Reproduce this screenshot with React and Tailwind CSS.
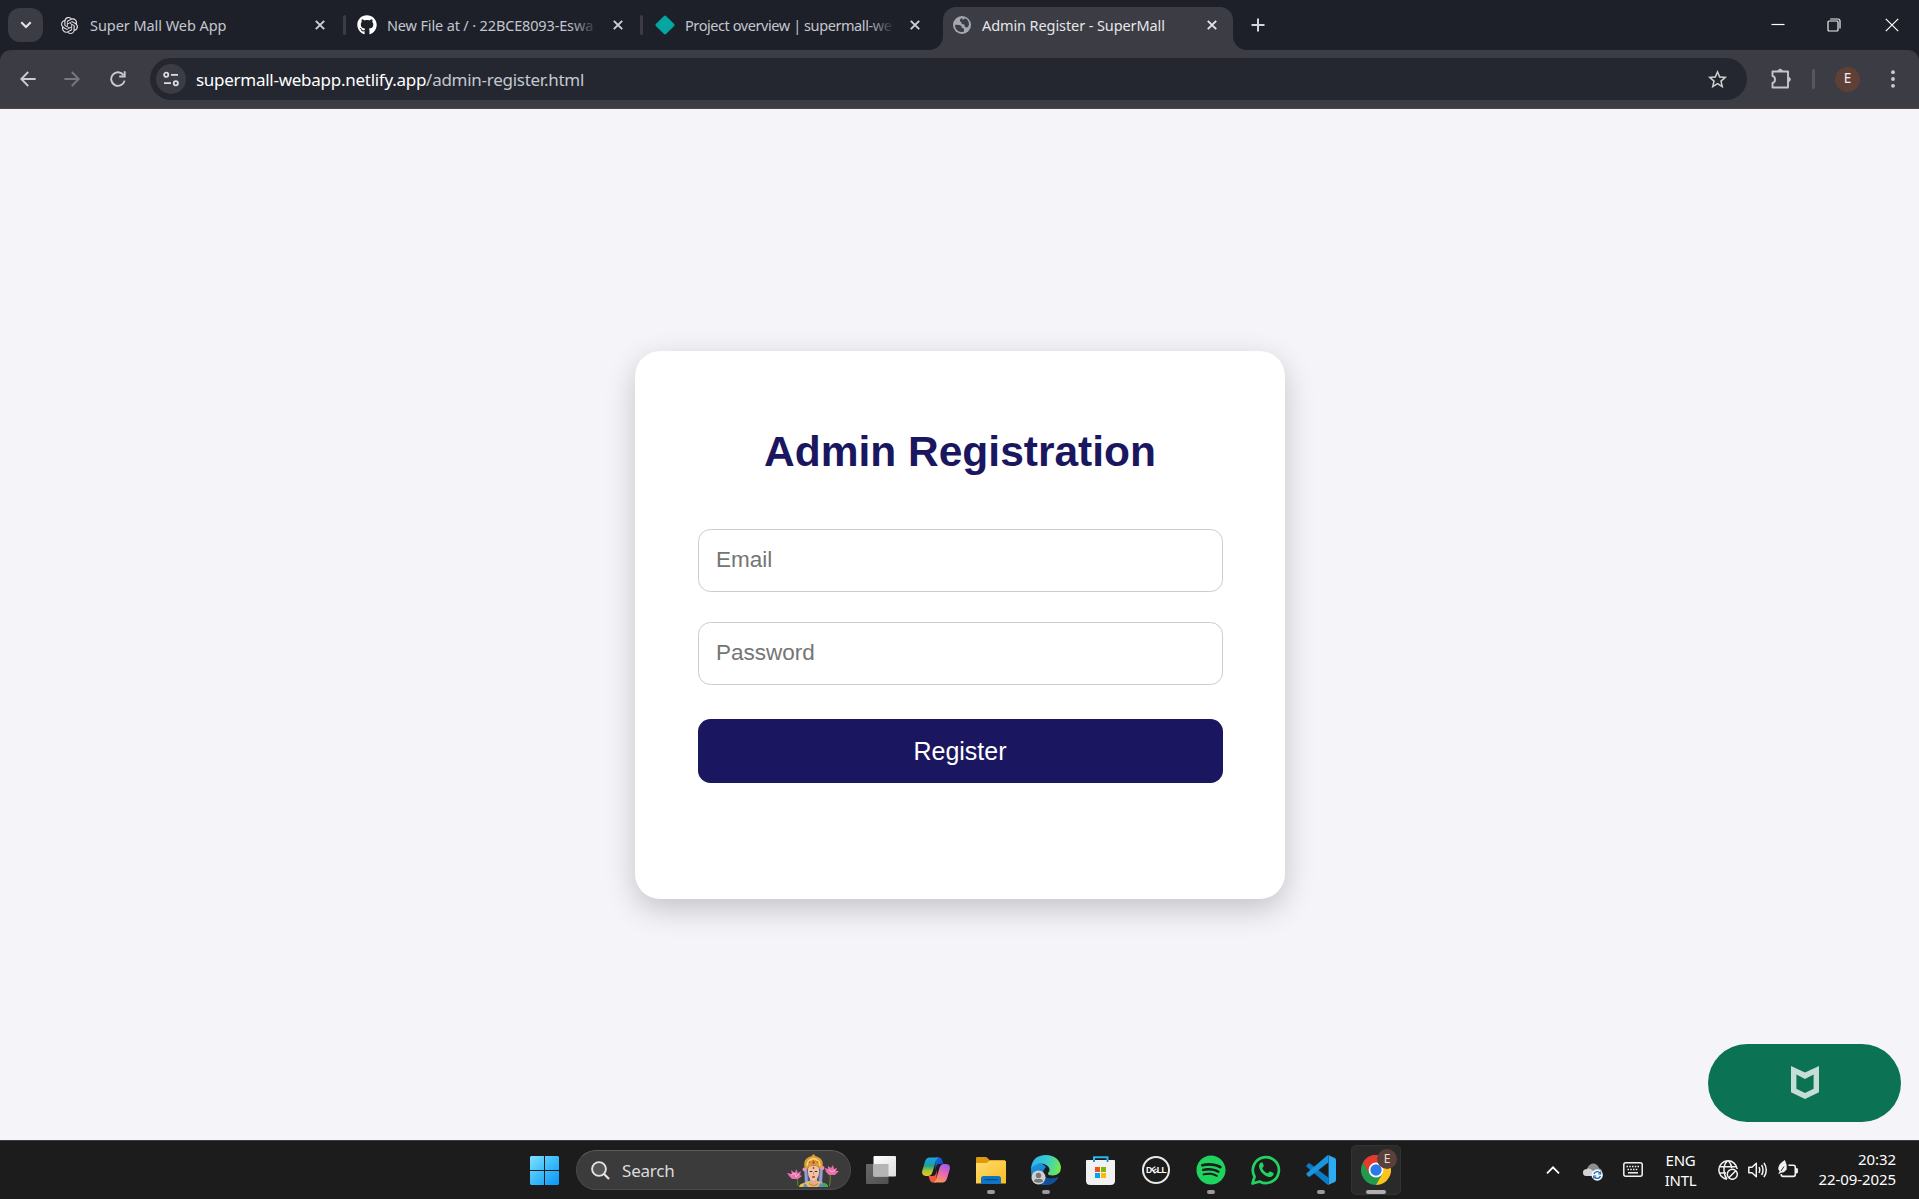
import React from "react";
import { SiOpenai } from "react-icons/si";
import { FaGithub, FaSpotify } from "react-icons/fa";
import { MdStarBorder } from "react-icons/md";

function CloseGlyph({ className }) {
  return (
    <svg viewBox="0 0 10 10" className={className} fill="none" stroke="currentColor" strokeWidth="1.9">
      <path d="M0.8 0.8 9.2 9.2M9.2 0.8 0.8 9.2" />
    </svg>
  );
}

function GlobeIcon() {
  return (
    <svg viewBox="0 0 18 18" className="size-[18px]">
      <circle cx="9" cy="9" r="9" fill="#a2a7b1" />
      <path d="M9.200 2.100Q6.500 3 7 5Q7.300 6 8.500 6.200Q8 8 10 8.300Q12.500 8.500 11.500 10.500L13.200 11.500Q15.800 11 16 8.500Q16 3.500 11.500 2.300L10.500 3.800Q9 4 9.200 2.100Z" fill="#3b3c44" />
      <path d="M2.100 8.700 6.500 9Q9 9.500 8.800 11.500Q9 12.500 10.500 12.300Q11.500 13 10.800 15.700Q5 16.800 2.500 12Q2 10.500 2.100 8.700Z" fill="#3b3c44" />
    </svg>
  );
}

function Tab({ icon, title, width, iconWidth, tracking, fade }) {
  return (
    <div className={`flex h-[50px] shrink-0 items-center ${width}`}>
      <div className={`flex shrink-0 items-center ${iconWidth}`}>{icon}</div>
      <div className="relative h-[22px] min-w-0 flex-1 overflow-hidden whitespace-nowrap">
        <span className={`block text-[14.5px] leading-[22px] text-[#c3c6cf] ${tracking}`}>{title}</span>
        {fade && <div className="absolute inset-y-0 right-0 w-7 bg-linear-to-r from-transparent to-[#1d2028]" />}
      </div>
      <div className="flex w-[39px] shrink-0 justify-center">
        <CloseGlyph className="size-[10px] text-[#cfd1d8]" />
      </div>
    </div>
  );
}

function Separator({ className }) {
  return <div className={`h-5 w-[3px] shrink-0 rounded-full bg-[#3b3c44] ${className}`} />;
}

function TabStrip() {
  return (
    <div className="flex h-[50px] w-full items-center bg-[#1d2028]">
      <div className="ml-2 flex h-[34px] w-[35px] shrink-0 items-center justify-center rounded-[12px] bg-[#3b3c44]">
        <svg viewBox="0 0 12 8" className="h-2 w-3" fill="none" stroke="#e3e3e8" strokeWidth="2.2">
          <path d="M1.3 1.3 6 6 10.7 1.3" />
        </svg>
      </div>
      <Tab
        width="ml-[18px] w-[278px]"
        iconWidth="w-[29px]"
        tracking="tracking-[-0.06px]"
        icon={<SiOpenai className="size-[17px] text-[#e6e6ea]" />}
        title="Super Mall Web App"
      />
      <Separator className="ml-[4px]" />
      <Tab
        width="ml-[11px] w-[280px]"
        iconWidth="w-[30px]"
        tracking="tracking-[-0.15px]"
        icon={<FaGithub className="size-5 text-white" />}
        title="New File at / · 22BCE8093-Eswa"
        fade
      />
      <Separator className="ml-[3px]" />
      <Tab
        width="ml-[12px] w-[279px]"
        iconWidth="w-[30px]"
        tracking="tracking-[-0.42px]"
        icon={
          <svg viewBox="0 0 20 20" className="size-5">
            <path d="M9 .9Q10 0 11 .9L19.2 9Q20 10 19.2 11L11 19.1Q10 20 9 19.1L.8 11Q0 10 .8 9Z" fill="#05a5a0" />
          </svg>
        }
        title="Project overview | supermall-we"
        fade
      />
      <div className="ml-[-5px] flex h-[50px] items-end">
        <svg viewBox="0 0 14 14" className="size-[14px]"><path d="M14 0A14 14 0 0 1 0 14H14Z" fill="#3b3c44" /></svg>
        <div className="mt-2 flex h-[43px] w-[290px] items-center rounded-t-[13px] bg-[#3b3c44] pb-[7px] pl-[10px]">
          <GlobeIcon />
          <span className="ml-[11px] flex-1 whitespace-nowrap text-[14.5px] leading-[22px] tracking-[-0.1px] text-[#e6e6ea]">
            Admin Register - SuperMall
          </span>
          <CloseGlyph className="mr-[16px] size-[10px] text-[#e6e6ea]" />
        </div>
        <svg viewBox="0 0 14 14" className="size-[14px]"><path d="M0 0A14 14 0 0 0 14 14H0Z" fill="#3b3c44" /></svg>
      </div>
      <svg viewBox="0 0 14 14" className="ml-[4px] size-[14px]" stroke="#d4d5dc" strokeWidth="2">
        <path d="M7 .5V13.5M.5 7H13.5" />
      </svg>
      <div className="flex-1" />
      <svg viewBox="0 0 14 14" className="mr-[42px] size-[14px]" stroke="#fff" strokeWidth="1.2">
        <path d="M.5 6.500H13.5" />
      </svg>
      <svg viewBox="0 0 14 14" className="mr-[44px] size-[14px]" fill="none" stroke="#f2f2f2" strokeWidth="1.2">
        <rect x="1" y="3" width="10" height="10" rx="1" />
        <path d="M3.2 1H11Q13 1 13 3V10.5" />
      </svg>
      <svg viewBox="0 0 14 14" className="mr-[20.5px] size-[14px]" stroke="#fff" strokeWidth="1.2">
        <path d="M.8.8 13.2 13.2M13.2.8.8 13.2" />
      </svg>
    </div>
  );
}

function Toolbar() {
  return (
    <div className="bg-[#1d2028]">
      <div className="flex h-[59px] items-center rounded-t-[11px] border-b border-[#504648] bg-[#3b3c44]">
        <svg viewBox="0 0 16 16" className="ml-5 size-4" fill="none" stroke="#c9cbd3" strokeWidth="1.9">
          <path d="M15.7 8H1.6M8.2 1 1.3 8 8.2 15" />
        </svg>
        <svg viewBox="0 0 16 16" className="ml-[28px] size-4" fill="none" stroke="#777980" strokeWidth="1.9">
          <path d="M.3 8H14.4M7.8 1 14.7 8 7.8 15" />
        </svg>
        <svg viewBox="0 0 16 16" className="ml-[29.5px] size-4" fill="none" stroke="#c9cbd3" strokeWidth="1.9">
          <path d="M13.6 4.200A6.800 6.800 0 1 0 14.6 9.600" />
          <path d="M14.7.3V5.500H9.2" />
        </svg>
        <div className="ml-[24.5px] flex h-[42px] w-[1597px] items-center rounded-full bg-[#24272f]">
          <div className="ml-[6px] flex size-[30px] items-center justify-center rounded-full bg-[#3b3c44]">
            <svg viewBox="0 0 16 16" className="size-4" fill="none" stroke="#dcdde2" strokeWidth="1.8">
              <circle cx="3.2" cy="3.8" r="2.1" />
              <path d="M8 3.8H15M1 12.2H8" />
              <circle cx="12.8" cy="12.2" r="2.1" />
            </svg>
          </div>
          <div className="ml-[10px] flex-1 pt-px whitespace-nowrap text-[17px] leading-6 tracking-[-0.27px] text-white">
            supermall-webapp.netlify.app<span className="text-[#c4c7d0]">/admin-register.html</span>
          </div>
          <MdStarBorder className="mr-[18px] size-[23px] text-[#cfcfd2]" />
        </div>
        <svg viewBox="0 0 22 22" className="ml-[23px] size-[22px]" fill="none" stroke="#c3c6d0" strokeWidth="1.9" strokeLinejoin="round">
          <path d="M2.5 3.5H18V19.500H2.5V15Q5 14.500 5 11.500T2.500 8Z" />
          <path d="M8 2.800A2.300 2.300 0 0 1 12.400 2.800ZM18.700 9.200A2.300 2.300 0 0 1 18.700 13.600Z" fill="#c3c6d0" strokeWidth="1" />
        </svg>
        <div className="ml-[20px] h-5 w-[3px] rounded-full bg-[#56585f]" />
        <div className="ml-[20px] flex size-[25px] items-center justify-center rounded-full bg-[#5f4037] text-[13.500px] leading-none text-[#f0eeee]">
          E
        </div>
        <svg viewBox="0 0 4 18" className="ml-[30.5px] h-[18px] w-1" fill="#c9cbd3">
          <circle cx="2" cy="2.2" r="1.9" />
          <circle cx="2" cy="9" r="1.9" />
          <circle cx="2" cy="15.8" r="1.9" />
        </svg>
      </div>
    </div>
  );
}

function RegisterPage() {
  return (
    <div className="relative flex h-[1031px] flex-col items-center bg-[#f4f4f9] pt-[242px] pl-px font-['Liberation_Sans',Arial,sans-serif]">
      <form className="flex h-[548px] w-[650px] flex-col rounded-[25px] bg-white pr-[62px] pl-[63px] pt-[76px] shadow-[0_10px_31px_rgba(0,0,0,0.2)]">
        <h1 className="pr-px text-center text-[42.5px] leading-[50px] font-bold text-[#1a1660]">Admin Registration</h1>
        <input
          type="email"
          placeholder="Email"
          className="mt-[52px] h-[63px] rounded-[12.5px] border border-[#ccc] px-[17px] pb-px text-[22.5px] placeholder:text-[#757575]"
        />
        <input
          type="password"
          placeholder="Password"
          className="mt-[30px] h-[63px] rounded-[12.5px] border border-[#ccc] px-[17px] pb-px text-[22.5px] placeholder:text-[#757575]"
        />
        <button type="button" className="mt-[34px] h-[64px] rounded-[12.5px] bg-[#1a1660] pt-0.5 pr-px text-[25px] text-white">
          Register
        </button>
      </form>
      <div className="absolute right-[18px] bottom-[18px] flex h-[78px] w-[193px] items-center justify-center rounded-full bg-[#0b7353]">
        <svg viewBox="0 0 28 33" className="mb-px ml-px h-[33px] w-7">
          <path
            fillRule="evenodd"
            fill="#c5ded5"
            d="M0 0 14 6.6 28 0V26.2L14 33 0 26.2ZM5.4 8.6V22.8L14 27 22.6 22.8V8.6L14 13Z"
          />
        </svg>
      </div>
    </div>
  );
}

function GoddessArt() {
  return (
    <svg viewBox="0 0 52 33" className="h-[33px] w-[52px]">
      <path d="M9 21Q11 27 11 32M43 17Q44 25 42.500 32" stroke="#5d7f1c" strokeWidth="1.200" fill="none" />
      <g fill="#e870ad">
        <path d="M0 19 5 20 4 16 8 19 9 15 11 19 14 17 13 21 15 22 11 25H5L2 22Z" />
        <path d="M38 14 41 15 41 12 44 14 46 11 47 15 50 14 49 17 52 17 48 21H42L39 18Z" />
      </g>
      <path d="M4 21 8 19 9 23 12 20M42 16 45 18 48 16" stroke="#fbb9da" strokeWidth="1" fill="none" />
      <path d="M19 12Q17 20 18 27L15 31H38L35 27Q36 20 34 12Z" fill="#4b579f" />
      <path d="M12 33Q12.500 29.500 17 29L22 27H31L36 29Q40.500 29.500 41 33Z" fill="#e9c04a" />
      <path d="M34 28.500Q40.500 29 41 33H35Z" fill="#46a566" />
      <path d="M18 29 21 33H16ZM34 28 31 33H36Z" fill="#5a8ed2" />
      <path d="M17 14H20L21 28 18 30ZM33 14H36L35 30 32 28Z" fill="#c9cfe6" opacity=".6" />
      <path d="M23 23H30V28L32 31 27 33 21 31 23 28Z" fill="#e3ab88" />
      <path d="M21 15Q21 12 26.500 11.500 32 12 32 15V19Q31.500 25 26.500 27 21.500 25 21 19Z" fill="#efc3a2" />
      <path d="M17.500 14Q16 5 22 3Q25 2.500 26.500 0Q28 2.500 31 3Q37 5 35.500 14L32.500 15Q31 11.500 26.500 11.500T20.500 15Z" fill="#d99d33" />
      <path d="M20 12Q20 6 26.500 4.500Q33 6 33 12" fill="none" stroke="#f7d673" strokeWidth="1.400" />
      <path d="M26.500 6 28 8.500 26.500 10.500 25 8.500Z" fill="#cf3f4c" />
      <circle cx="22.500" cy="8" r=".8" fill="#cf3f4c" />
      <circle cx="30.500" cy="8" r=".8" fill="#cf3f4c" />
      <circle cx="26.500" cy="14" r=".9" fill="#c8223a" />
      <path d="M22.800 17.500H25.200M27.800 17.500H30.200" stroke="#46251b" strokeWidth="1.100" />
      <path d="M26.500 18V20.800" stroke="#c98664" strokeWidth=".9" />
      <path d="M25.200 23H27.900" stroke="#c2262e" strokeWidth="1.500" />
      <circle cx="17.500" cy="15.500" r="2" fill="#ee8fb9" />
      <circle cx="35.500" cy="14" r="2" fill="#ee8fb9" />
      <path d="M22 29.500Q26.500 33.500 31 29.500" stroke="#c8862a" strokeWidth="1" fill="none" />
    </svg>
  );
}

function TaskButton({ children, indicator, active }) {
  return (
    <div
      className={`relative flex h-[50px] w-[50px] shrink-0 items-center justify-center rounded-[5px] ${
        active ? "border border-[#333] bg-[#2a2a2a]" : ""
      }`}
    >
      {children}
      {indicator && (
        <div
          className={`absolute left-1/2 h-1 -translate-x-1/2 rounded-full ${
            active ? "bottom-0 w-5 bg-[#b0b0b0]" : "bottom-px w-2 bg-[#9a9a9a]"
          }`}
        />
      )}
    </div>
  );
}

function WindowsLogo() {
  return (
    <svg viewBox="0 0 29 29" className="size-[29px]">
      <defs>
        <linearGradient id="win" x1="0" y1="0" x2="29" y2="29" gradientUnits="userSpaceOnUse">
          <stop offset="0" stopColor="#80e1ff" />
          <stop offset="0.5" stopColor="#3cbcf9" />
          <stop offset="1" stopColor="#0a95f8" />
        </linearGradient>
      </defs>
      <path fill="url(#win)" d="M1 0H14V14H0V1ZM15 0H28L29 1V14H15ZM0 15H14V29H1L0 28ZM15 15H29V28L28 29H15Z" />
    </svg>
  );
}

function TaskViewIcon() {
  return (
    <svg viewBox="0 0 30 28" className="h-7 w-[30px]">
      <defs>
        <linearGradient id="tv1" x1="0" y1="0" x2="1" y2="1">
          <stop offset="0" stopColor="#fff" />
          <stop offset="1" stopColor="#dcdcdc" />
        </linearGradient>
        <linearGradient id="tv2" x1="0" y1="0" x2="1" y2="1">
          <stop offset="0" stopColor="#686868" />
          <stop offset="1" stopColor="#505050" />
        </linearGradient>
      </defs>
      <rect x="0" y="8" width="22.500" height="20" rx="1" fill="url(#tv2)" />
      <rect x="7.500" y="0" width="22.500" height="20.500" rx="1" fill="url(#tv1)" />
      <path d="M7.500 8H22.500V20.500H7.500Z" fill="#b5b5b5" />
    </svg>
  );
}

function CopilotIcon() {
  return (
    <svg viewBox="0 0 28 26" className="h-[26px] w-7">
      <defs>
        <linearGradient id="cp1" x1="0.300" y1="0" x2="0.300" y2="1">
          <stop offset="0" stopColor="#17a4ee" />
          <stop offset="0.450" stopColor="#22a08f" />
          <stop offset="0.750" stopColor="#b3c832" />
          <stop offset="1" stopColor="#f5b92b" />
        </linearGradient>
        <linearGradient id="cp2" x1="0.700" y1="0" x2="0.300" y2="1">
          <stop offset="0" stopColor="#a05ae8" />
          <stop offset="0.450" stopColor="#e668b6" />
          <stop offset="1" stopColor="#fb9a4f" />
        </linearGradient>
        <linearGradient id="cp3" x1="0" y1="0" x2="1" y2="1">
          <stop offset="0" stopColor="#1c6fe8" />
          <stop offset="1" stopColor="#1535a8" />
        </linearGradient>
      </defs>
      <path d="M14 0.500H17.500Q19.500 .8 20.200 3L21.500 7H17Q15 7 14.300 9L13 13Z" fill="url(#cp3)" />
      <path d="M14 25.500H10.500Q8.500 25.200 7.800 23L6.500 19H11Q13 19 13.700 17L15 13Z" fill="#f0583f" />
      <path d="M7.500 .5H17Q14.800 1 14 3.500L10.500 15Q9.300 19 6 19H3.500Q-.8 18.500 .3 13.500L3 4.500Q4.300 .7 7.500 .5Z" fill="url(#cp1)" />
      <path d="M20.500 25.500H11Q13.200 25 14 22.500L17.500 11Q18.700 7 22 7H24.500Q28.800 7.500 27.700 12.500L25 21.500Q23.700 25.300 20.500 25.500Z" fill="url(#cp2)" />
    </svg>
  );
}

function FolderIcon() {
  return (
    <svg viewBox="0 0 30 27" className="h-[27px] w-[30px]">
      <defs>
        <linearGradient id="fd" x1="0" y1="0" x2="1" y2="1">
          <stop offset="0" stopColor="#ffdc6e" />
          <stop offset="1" stopColor="#fcbc22" />
        </linearGradient>
      </defs>
      <path d="M1.200 0H9.500Q10.500 0 11.300 .8L13.500 3H29V8H0V1.200Q0 0 1.200 0Z" fill="#dc9a0c" />
      <path d="M0 6H9.500Q11 6 12 5L12.800 4.200Q13.300 3.700 14.300 3.700H29Q30 3.700 30 4.700V26.500H0Z" fill="url(#fd)" />
      <path d="M5 27V21.500Q5 19 7.500 19H22.500Q25 19 25 21.500V27Z" fill="#0f74c4" />
      <path d="M8.500 22.700H21.500" stroke="#06457e" strokeWidth="1" />
    </svg>
  );
}

function EdgeIcon() {
  return (
    <svg viewBox="0 0 30 30" className="size-[30px]">
      <defs>
        <linearGradient id="eg1" x1="0" y1="0.300" x2="1" y2="0.500">
          <stop offset="0" stopColor="#2fb2ef" />
          <stop offset="0.500" stopColor="#38cbd0" />
          <stop offset="1" stopColor="#74e94a" />
        </linearGradient>
        <linearGradient id="eg2" x1="0" y1="0" x2="0.600" y2="1">
          <stop offset="0" stopColor="#1da1e6" />
          <stop offset="1" stopColor="#0b5cb4" />
        </linearGradient>
      </defs>
      <path d="M0 15Q0 10 5 8.500Q11 7 15 12Q11 16 12.500 20Q15 26 27.500 22.300Q23 30 15 30Q0 30 0 15Z" fill="url(#eg2)" />
      <path d="M12.500 19Q15 26 27.500 22.300Q23 30 15 30Q11 28 11 23Z" fill="#124e9c" />
      <path d="M0 14Q1 0 15 0Q28 .5 30 12Q30 20 22 20.500Q16.500 20.500 17 18.300Q19 16.500 18.500 14Q17 9 10 8.500Q3 8.500 0 14Z" fill="url(#eg1)" />
      <circle cx="7.500" cy="22.500" r="7" fill="#cfcfcf" />
      <circle cx="7.500" cy="20.500" r="2.700" fill="#777" />
      <path d="M3 26.500Q3 24 5 24H10Q12 24 12 26.500Q7.500 29 3 26.500Z" fill="#777" />
    </svg>
  );
}

function StoreIcon() {
  return (
    <svg viewBox="0 0 29 29" className="mr-px size-[29px]">
      <path d="M8 5V1.200H21.500V5" fill="none" stroke="#2bb5ee" strokeWidth="2" />
      <path d="M.7 4H28.300Q29 4 29 5V24.500Q29 29 24.500 29H4.500Q0 29 0 24.500V5Q0 4 .7 4Z" fill="#f1f1f1" />
      <path d="M8 4V6M21.500 4V6" stroke="#1389cf" strokeWidth="1.800" />
      <path d="M9 11H14V16H9Z" fill="#f25022" />
      <path d="M15 11H20V16H15Z" fill="#7fba00" />
      <path d="M9 17H14V22H9Z" fill="#00a4ef" />
      <path d="M15 17H20V22H15Z" fill="#ffb900" />
    </svg>
  );
}

function DellIcon() {
  return (
    <div className="flex size-7 items-center justify-center rounded-full border-2 border-[#e8e8e8]">
      <span className="font-['Liberation_Sans',Arial,sans-serif] text-[8.500px] leading-none font-bold tracking-[-0.500px] text-white">
        D<span className="inline-block -rotate-[35deg]">E</span>LL
      </span>
    </div>
  );
}

function WhatsAppIcon() {
  return (
    <svg viewBox="0 0 30 30" className="size-[30px]">
      <path d="M1.500 28.500 3.600 21.600A13 13 0 1 1 8.600 26.500Z" fill="none" stroke="#22d160" strokeWidth="2.700" strokeLinejoin="round" />
      <path
        d="M10.300 7.500C8.500 8.300 7.700 10 8.100 12 9 17 13.500 21.300 18 22 20.200 22.300 22.500 21 22.700 18.700 22.700 17.800 19.500 16.500 18.800 16.500 18 16.500 17.300 18.500 16.500 18.300 14 17.300 12.200 15.300 11.400 13.400 11.200 12.700 12.800 11.800 12.800 11 12.800 10.200 11.700 7.800 11.300 7.500 11 7.300 10.700 7.300 10.300 7.500Z"
        fill="#22d160"
      />
    </svg>
  );
}

function VsCodeIcon() {
  return (
    <svg viewBox="0 0 30 30" className="size-[30px]">
      <path d="M.6 10.200 2.300 8.500Q3.200 8 4 8.600L22.300 22.500V29.600Q21.500 30 20.800 29.300L.6 11.800Q0 11 .6 10.200Z" fill="#0b7bc4" />
      <path d="M.6 19.800 2.300 21.500Q3.200 22 4 21.400L22.300 7.500V.4Q21.500 0 20.800 .7L.6 18.200Q0 19 .6 19.800Z" fill="#1a94dd" />
      <path d="M22 0 28.800 3Q30 3.600 30 5V25Q30 26.400 28.800 27L22 30Q22.600 29.500 22.600 28V2Q22.600 .5 22 0Z" fill="#2cabf4" />
    </svg>
  );
}

function ChromeIcon() {
  return (
    <svg viewBox="0 0 30 30" className="size-[30px]">
      <path d="M15 15V7.500H28A15 15 0 0 1 15 30Z" fill="#fcc31c" />
      <path d="M2 7.500A15 15 0 0 0 15 30L21.500 18.700 15 15Z" fill="#219a4b" />
      <path d="M15 7.500H28.300A15 15 0 0 0 2 7.500L8.500 18.700Z" fill="#e33b2e" />
      <circle cx="15" cy="15" r="7.400" fill="#fff" />
      <circle cx="15" cy="15" r="5.700" fill="#2b78ea" />
    </svg>
  );
}

function Tray() {
  return (
    <div className="flex h-full items-center pr-[23px] text-[15px] leading-5 text-white">
      <svg viewBox="0 0 14 8" className="h-2 w-[14px]" fill="none" stroke="#fff" strokeWidth="1.800">
        <path d="M1 7.300 7 1.300 13 7.300" />
      </svg>
      <svg viewBox="0 0 20 18" className="ml-[23px] mt-1 h-[18px] w-5">
        <path d="M5 4Q7 0 11 .5Q14.500 1 16 5Q19 6 19 9L12 13H4Q0 13 0 9.500Q0 6.500 3.500 6.200Z" fill="#8e8e8e" />
        <path d="M3.500 6.200Q7 4.500 9.500 7.500L12 9.500V13H4Q0 13 0 9.500Q0 6.500 3.500 6.200Z" fill="#d3d3d3" />
        <circle cx="14.200" cy="12" r="5.700" fill="#f4f8fc" />
        <path d="M11 11A3.400 3.400 0 0 1 17 10M17.400 13A3.400 3.400 0 0 1 11.400 14" stroke="#1769b5" strokeWidth="1.400" fill="none" />
        <path d="M17.700 8.500V11H15.200M10.700 15.500V13H13.200" stroke="#1769b5" strokeWidth="1.100" fill="none" />
      </svg>
      <svg viewBox="0 0 20 15" className="mb-px ml-5 h-[15px] w-5" fill="none" stroke="#f3f3f3" strokeWidth="1.500">
        <rect x=".8" y=".8" width="18.400" height="13.400" rx="2" />
        <path d="M3.500 4.400H16.500M4.500 7.400H15.500" strokeDasharray="1.500 1.250" strokeWidth="1.500" />
        <path d="M5 10.800H15" />
      </svg>
      <div className="ml-[21px] w-[33px] text-center tracking-[-0.300px]">
        <div>ENG</div>
        <div>INTL</div>
      </div>
      <svg viewBox="0 0 20 20" className="ml-[21px] size-5" fill="none" stroke="#f3f3f3" strokeWidth="1.500">
        <path d="M9 19.200A9.200 9.200 0 1 1 19.200 9M1.500 6.700H18.500M1.300 13H8M9.600 .8Q5.500 4.500 6 10.500Q6.300 16 9 19M10.400 .8Q13 3.500 13.800 8" />
        <circle cx="14.300" cy="14.300" r="5" />
        <path d="M10.800 17.800 17.800 10.800" />
      </svg>
      <svg viewBox="0 0 20 18" className="ml-[10px] h-[18px] w-5" fill="none" stroke="#f3f3f3" strokeWidth="1.500">
        <path d="M.8 6.200V11.800H4L8.300 15.800V2.200L4 6.200Z" strokeLinejoin="round" />
        <path d="M11 6.200Q12.500 9 11 11.800M13.600 4Q16.500 9 13.600 14M16 1.800Q20.500 9 16 16.200" />
      </svg>
      <svg viewBox="0 0 20 18" className="ml-[10px] mb-[3px] h-[18px] w-5" fill="none" stroke="#f3f3f3" strokeWidth="1.600">
        <path d="M10.500 5.200H15.300Q17.300 5.200 17.300 7V14.500Q17.300 16.400 15.300 16.400H5Q3.200 16.400 3.200 14" />
        <path d="M18 8.700H19.400V12.900H18Z" fill="#f3f3f3" strokeWidth="1" />
        <path d="M6.700 .5Q0 4.500 .8 9.500L2 11.300 .8 13.500 3 12.300Q6.500 12.500 8.200 9.500Q9 5 6.700 .5Z" fill="#f3f3f3" strokeWidth=".8" />
        <path d="M3 11 6 6.500" stroke="#1c1c1c" strokeWidth=".9" />
      </svg>
      <div className="ml-[18px] w-[80px] pb-0.5 text-right tracking-[-0.080px] whitespace-nowrap">
        <div>20:32</div>
        <div>22-09-2025</div>
      </div>
    </div>
  );
}

function Taskbar() {
  return (
    <div className="flex h-[59px] items-center border-t border-[#3d3d3d] bg-[#1c1c1c]">
      <div className="ml-[530px]">
        <WindowsLogo />
      </div>
      <div className="ml-[17px] flex h-10 w-[275px] items-center rounded-full border border-[#4a4a4a] border-t-[#5c5c5c] bg-[#3b3b3b]">
        <svg viewBox="0 0 19 19" className="ml-[14px] size-[19px]" fill="none" stroke="#e3e3e3" strokeWidth="1.900">
          <circle cx="8" cy="8" r="6.900" fill="#555" />
          <path d="M12.800 12.800 18 18" strokeWidth="2.300" />
        </svg>
        <span className="ml-3 flex-1 pt-px text-[17px] leading-6 tracking-[-0.200px] text-[#dcdcdc]">Search</span>
        <div className="mr-[11px]">
          <GoddessArt />
        </div>
      </div>
      <div className="ml-[5px] flex gap-[5px]">
        <TaskButton><TaskViewIcon /></TaskButton>
        <TaskButton><CopilotIcon /></TaskButton>
        <TaskButton indicator><FolderIcon /></TaskButton>
        <TaskButton indicator><EdgeIcon /></TaskButton>
        <TaskButton><StoreIcon /></TaskButton>
        <TaskButton><DellIcon /></TaskButton>
        <TaskButton indicator><FaSpotify className="size-[30px] text-[#1ed45f]" /></TaskButton>
        <TaskButton><WhatsAppIcon /></TaskButton>
        <TaskButton indicator><VsCodeIcon /></TaskButton>
        <TaskButton indicator active>
          <ChromeIcon />
          <div className="absolute top-[3px] right-[3px] flex size-5 items-center justify-center rounded-full bg-[#5a4038] text-[12px] leading-none text-[#e8dcd8]">
            E
          </div>
        </TaskButton>
      </div>
      <div className="flex-1" />
      <Tray />
    </div>
  );
}

export default function App() {
  return (
    <div className="flex h-[1199px] w-[1919px] flex-col overflow-hidden font-['Noto_Sans','Open_Sans',sans-serif]">
      <TabStrip />
      <Toolbar />
      <RegisterPage />
      <Taskbar />
    </div>
  );
}
